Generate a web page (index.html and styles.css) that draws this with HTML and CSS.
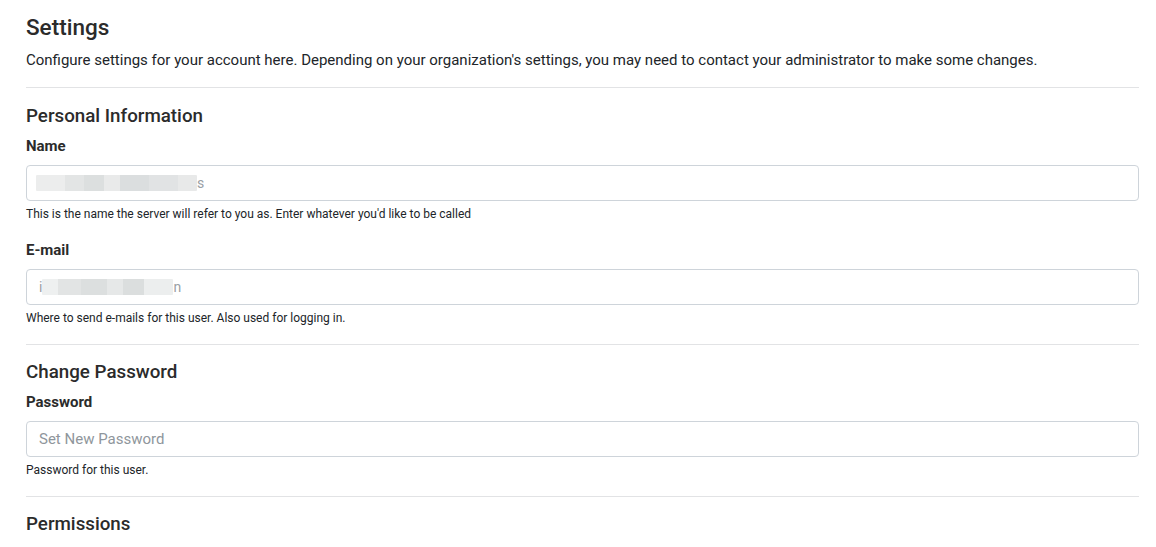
FILE: index.html
```html
<!DOCTYPE html>
<html lang="en">
<head>
<meta charset="utf-8">
<title>Settings</title>
<link rel="stylesheet" href="styles.css">
</head>
<body>
<main class="settings">
  <header class="page-head">
    <h1 class="page-title">Settings</h1>
    <p class="page-desc">Configure settings for your account here. Depending on your organization's settings, you may need to contact your administrator to make some changes.</p>
  </header>
  <hr class="divider">
  <section class="group">
    <h2 class="group-title">Personal Information</h2>
    <div class="field">
      <label class="field-label">Name</label>
      <div class="input">
        <span class="blur blur-name"></span><span class="tail">s</span>
      </div>
      <small class="help">This is the name the server will refer to you as. Enter whatever you'd like to be called</small>
    </div>
    <div class="field">
      <label class="field-label">E-mail</label>
      <div class="input">
        <span class="lead">i</span><span class="blur blur-mail"></span><span class="tail">n</span>
      </div>
      <small class="help">Where to send e-mails for this user. Also used for logging in.</small>
    </div>
  </section>
  <hr class="divider">
  <section class="group group-next">
    <h2 class="group-title">Change Password</h2>
    <div class="field">
      <label class="field-label">Password</label>
      <div class="input"><span class="placeholder">Set New Password</span></div>
      <small class="help">Password for this user.</small>
    </div>
  </section>
  <hr class="divider">
  <section class="group group-next">
    <h2 class="group-title">Permissions</h2>
  </section>
</main>
</body>
</html>
```
FILE: styles.css
```css
* { box-sizing: border-box; }
html, body { margin: 0; padding: 0; background: #fff; }
body {
  font-family: Roboto, "Liberation Sans", sans-serif;
  color: #212529;
  overflow: hidden;
}
.settings {
  padding: 12px 17px 0 26px;
}
.page-title {
  margin: 0;
  font-size: 22.5px;
  line-height: 30px;
  font-weight: 500;
  color: #2b2b2b;
}
.page-desc {
  margin: 6px 0 0;
  font-size: 15px;
  line-height: 24px;
  color: #212529;
}
.divider {
  border: 0;
  border-top: 1px solid #e2e3e5;
  margin: 15px 0 0;
  height: 0;
}
.group { margin-top: 16px; }
.group-next { margin-top: 15px; }
.group-title {
  margin: 0;
  font-size: 18.75px;
  line-height: 24px;
  font-weight: 500;
  color: #2b2b2b;
}
.field { margin-top: 7px; }
.field + .field { margin-top: 17px; }
.field-label {
  display: block;
  font-size: 15px;
  line-height: 22px;
  font-weight: 700;
  color: #2b2b2b;
}
.input {
  margin-top: 8px;
  height: 36px;
  border: 1px solid #ced4da;
  border-radius: 4px;
  display: flex;
  align-items: center;
  padding: 0 12px;
  font-size: 15px;
  color: #495057;
}
.placeholder { color: #8f969c; }
.blur {
  display: inline-block;
  height: 16px;
  border-radius: 1px;
}
.blur-name {
  width: 161px;
  margin-left: -3px;
  background: linear-gradient(90deg, #eceded 0 18%, #e3e5e5 18% 30%, #dcdfdf 30% 42%, #e9eaea 42% 52%, #dbdedf 52% 70%, #e1e3e4 70% 88%, #e8e9e9 88%);
}
.blur-mail {
  width: 131px;
  background: linear-gradient(90deg, #eef0f0 0 12%, #e2e4e4 12% 30%, #dcdfdf 30% 50%, #e6e8e8 50% 62%, #dbdede 62% 78%, #eceeee 78%);
}
.lead, .tail { color: #9aa0a4; font-size: 14px; }
.help {
  display: block;
  margin-top: 5px;
  font-size: 12px;
  line-height: 16px;
  color: #212529;
}
.group + .divider { margin-top: 18px; }
```
